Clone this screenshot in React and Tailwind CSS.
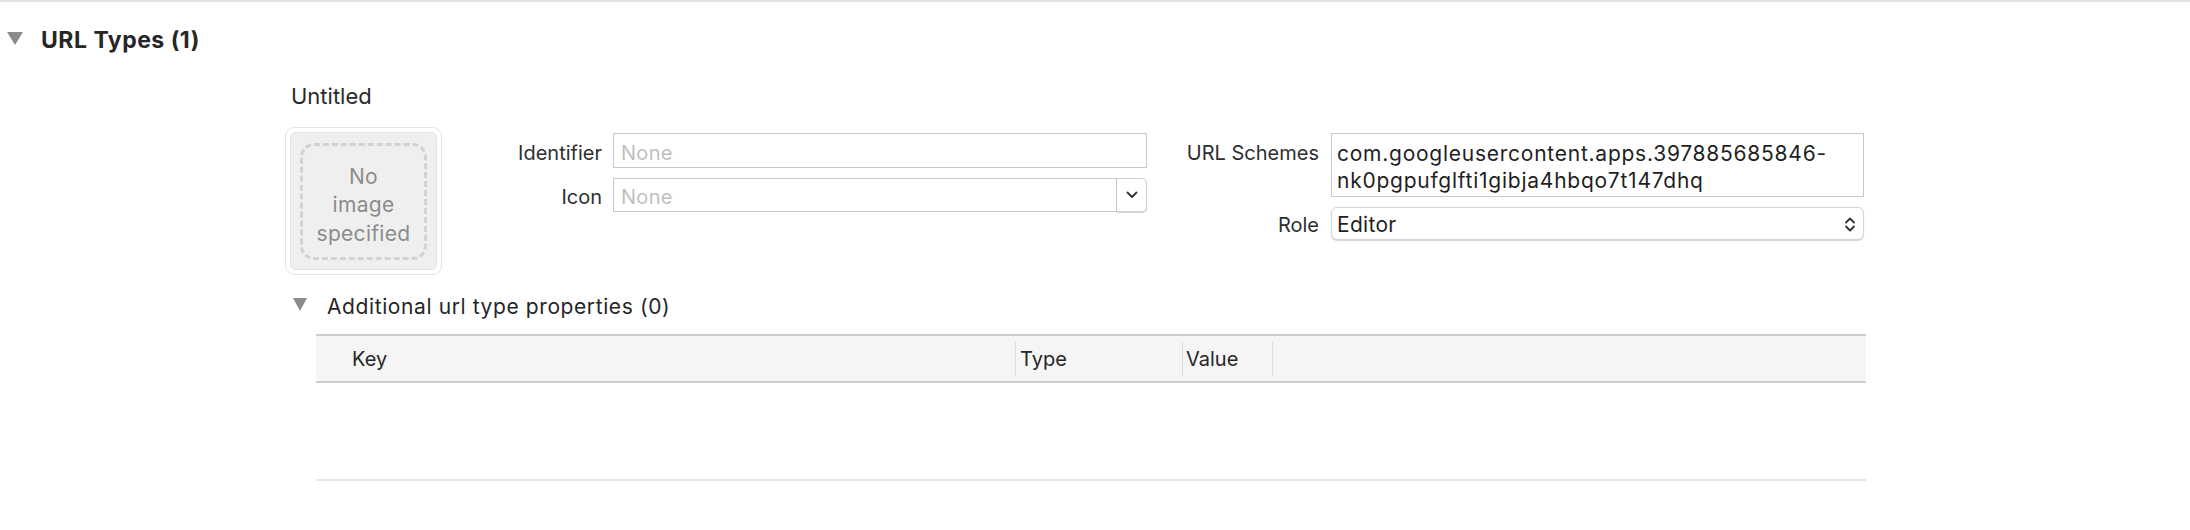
import React from "react";

const font = { fontFamily: "Inter, 'Liberation Sans', sans-serif" };

function Disclosure({ w = 16, h = 13 }) {
  return (
    <svg width={w} height={h} viewBox={`0 0 ${w} ${h}`} className="shrink-0">
      <polygon points={`0,0 ${w},0 ${w / 2},${h}`} fill="#8b8b8b" />
    </svg>
  );
}

function ImageWell() {
  return (
    <div className="h-[148px] w-[157px] shrink-0 rounded-[9px] border border-[#e4e4e4] bg-white p-[4px]">
      <div className="h-full w-full rounded-[6px] border border-[#e2e2e2] bg-[#efefef] px-[9px] pb-[9px] pt-[10px]">
        <div className="flex h-full w-full flex-col items-center justify-center rounded-[14px] border-[3px] border-dashed border-[#d3d3d3] pt-[8px] text-center text-[21px] leading-[28.5px] tracking-[0.3px] text-[#8c8c8c]">
          <span>No</span>
          <span>image</span>
          <span>specified</span>
        </div>
      </div>
    </div>
  );
}

function Label({ children, pt }) {
  return (
    <div className={`text-right text-[20px] leading-[24px] text-[#2e2e2e] ${pt}`}>
      {children}
    </div>
  );
}

export default function App() {
  return (
    <div style={font} className="h-[530px] w-full overflow-hidden bg-white">
      <div className="h-[2px] w-full bg-[#e3e3e3]" />

      <div className="mt-[23px] flex h-[30px] items-start">
        <div className="ml-[7px] mt-[7px]">
          <Disclosure />
        </div>
        <span className="ml-[18px] text-[23px] font-bold leading-[30px] tracking-[0.5px] text-[#262626]">
          URL Types (1)
        </span>
      </div>

      <div className="pl-[285px]">
        <div className="mt-[27px] pl-[6px] text-[22px] leading-[28px] text-[#2a2a2a]">
          Untitled
        </div>

        <div className="mt-[17px] flex items-start">
          <ImageWell />

          <div className="mt-[6px] grid grid-cols-[160px_534px] grid-rows-[35px_34px] gap-x-[11px] gap-y-[10px]">
            <Label pt="pt-[8px]">Identifier</Label>
            <div className="border border-[#c9c9c9] bg-white pl-[7px] pt-[7px] text-[20px] leading-[24px] tracking-[0.3px] text-[#bfbfbf]">
              None
            </div>
            <Label pt="pt-[7px]">Icon</Label>
            <div className="flex">
              <div className="flex-1 border border-[#c9c9c9] bg-white pl-[7px] pt-[6px] text-[20px] leading-[24px] tracking-[0.3px] text-[#bfbfbf]">
                None
              </div>
              <div className="flex w-[30px] items-center justify-center rounded-r-[5px] border border-l-0 border-[#d0d0d0] bg-white shadow-[0_1px_1px_rgba(0,0,0,0.18)]">
                <svg width="12" height="8" viewBox="0 0 12 8">
                  <path d="M1.5 1.5 L6 6 L10.5 1.5" fill="none" stroke="#3a3a3a" strokeWidth="2" strokeLinecap="round" strokeLinejoin="round" />
                </svg>
              </div>
            </div>
          </div>

          <div className="mt-[6px] grid grid-cols-[172px_533px] grid-rows-[64px_33px] gap-x-[12px] gap-y-[10px]">
            <Label pt="pt-[8px]">URL Schemes</Label>
            <div className="border border-[#c9c9c9] bg-white pl-[5px] pt-[6px] text-[21px] leading-[27px] tracking-[0.75px] text-[#1f1f1f]">
              <div>com.googleusercontent.apps.397885685846-</div>
              <div>nk0pgpufglfti1gibja4hbqo7t147dhq</div>
            </div>
            <Label pt="pt-[6px]">Role</Label>
            <div className="flex items-start justify-between rounded-[6px] border border-[#d4d4d4] bg-white pl-[5px] pr-[7px] pt-[5px] text-[21px] leading-[24px] tracking-[0.3px] text-[#1f1f1f] shadow-[0_1px_1px_rgba(0,0,0,0.16)]">
              <span>Editor</span>
              <svg width="12" height="17" viewBox="0 0 12 17" className="mt-[3px]">
                <path d="M2 6.5 L6 2.5 L10 6.5 M2 10.5 L6 14.5 L10 10.5" fill="none" stroke="#333" strokeWidth="1.8" strokeLinecap="round" strokeLinejoin="round" />
              </svg>
            </div>
          </div>
        </div>

        <div className="mt-[20px] flex h-[24px] items-start">
          <div className="ml-[8px] mt-[3px]">
            <Disclosure w={14} h={13} />
          </div>
          <span className="ml-[20px] text-[21px] leading-[24px] tracking-[0.6px] text-[#262626]">
            Additional url type properties (0)
          </span>
        </div>

        <div className="ml-[31px] mt-[15px] w-[1550px]">
          <div className="flex h-[49px] items-center border-y-2 border-[#cdcdcd] bg-[#f5f5f5] text-[20px] leading-[24px] text-[#262626]">
            <div className="w-[699px] pl-[36px]">Key</div>
            <div className="flex h-[34px] w-[167px] items-center border-l border-[#dcdcdc] pl-[4px]">Type</div>
            <div className="flex h-[34px] w-[90px] items-center border-l border-[#dcdcdc] pl-[3px]">Value</div>
            <div className="h-[34px] border-l border-[#dcdcdc]" />
          </div>
          <div className="h-[96px]" />
          <div className="h-[2px] bg-[#e6e6e6]" />
        </div>
      </div>
    </div>
  );
}
